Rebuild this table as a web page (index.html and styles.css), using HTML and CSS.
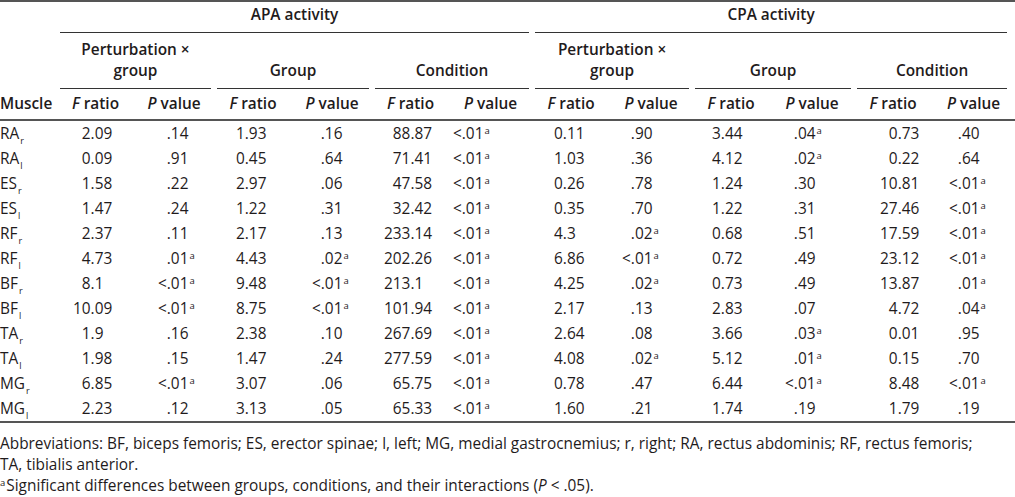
FILE: index.html
```html
<!DOCTYPE html>
<html lang="en">
<head>
<meta charset="utf-8">
<title>APA and CPA activity</title>
<link rel="stylesheet" href="styles.css">
</head>
<body>
<div class="page">
<table class="tbl">
<colgroup>
<col class="w-m"><col class="w1"><col class="w2"><col class="w3"><col class="w4"><col class="w5"><col class="w6"><col class="w7"><col class="w8"><col class="w9"><col class="w10"><col class="w11"><col class="w12">
</colgroup>
<thead>
<tr class="h1">
<th></th>
<th colspan="6"><div class="ul">APA activity</div></th>
<th colspan="6" class="last"><div class="ul">CPA activity</div></th>
</tr>
<tr class="h2">
<th></th>
<th colspan="2"><div class="ul">Perturbation ×<br>group</div></th>
<th colspan="2"><div class="ul">Group</div></th>
<th colspan="2"><div class="ul">Condition</div></th>
<th colspan="2"><div class="ul">Perturbation ×<br>group</div></th>
<th colspan="2"><div class="ul">Group</div></th>
<th colspan="2" class="last"><div class="ul">Condition</div></th>
</tr>
<tr class="h3">
<th class="muscle">Muscle</th>
<th><i>F</i> ratio</th><th><i>P</i> value</th>
<th><i>F</i> ratio</th><th><i>P</i> value</th>
<th><i>F</i> ratio</th><th><i>P</i> value</th>
<th><i>F</i> ratio</th><th><i>P</i> value</th>
<th><i>F</i> ratio</th><th><i>P</i> value</th>
<th><i>F</i> ratio</th><th><i>P</i> value</th>
</tr>
</thead>
<tbody class="data">
<tr><td>RA<sub>r</sub></td><td><span class="i">2</span>.09</td><td><span class="i"></span>.14</td><td><span class="i">1</span>.93</td><td><span class="i"></span>.16</td><td><span class="i">88</span>.87</td><td><span class="i">&lt;</span>.01<sup>a</sup></td><td><span class="i">0</span>.11</td><td><span class="i"></span>.90</td><td><span class="i">3</span>.44</td><td><span class="i"></span>.04<sup>a</sup></td><td><span class="i">0</span>.73</td><td><span class="i"></span>.40</td></tr>
<tr><td>RA<sub>l</sub></td><td><span class="i">0</span>.09</td><td><span class="i"></span>.91</td><td><span class="i">0</span>.45</td><td><span class="i"></span>.64</td><td><span class="i">71</span>.41</td><td><span class="i">&lt;</span>.01<sup>a</sup></td><td><span class="i">1</span>.03</td><td><span class="i"></span>.36</td><td><span class="i">4</span>.12</td><td><span class="i"></span>.02<sup>a</sup></td><td><span class="i">0</span>.22</td><td><span class="i"></span>.64</td></tr>
<tr><td>ES<sub>r</sub></td><td><span class="i">1</span>.58</td><td><span class="i"></span>.22</td><td><span class="i">2</span>.97</td><td><span class="i"></span>.06</td><td><span class="i">47</span>.58</td><td><span class="i">&lt;</span>.01<sup>a</sup></td><td><span class="i">0</span>.26</td><td><span class="i"></span>.78</td><td><span class="i">1</span>.24</td><td><span class="i"></span>.30</td><td><span class="i">10</span>.81</td><td><span class="i">&lt;</span>.01<sup>a</sup></td></tr>
<tr><td>ES<sub>l</sub></td><td><span class="i">1</span>.47</td><td><span class="i"></span>.24</td><td><span class="i">1</span>.22</td><td><span class="i"></span>.31</td><td><span class="i">32</span>.42</td><td><span class="i">&lt;</span>.01<sup>a</sup></td><td><span class="i">0</span>.35</td><td><span class="i"></span>.70</td><td><span class="i">1</span>.22</td><td><span class="i"></span>.31</td><td><span class="i">27</span>.46</td><td><span class="i">&lt;</span>.01<sup>a</sup></td></tr>
<tr><td>RF<sub>r</sub></td><td><span class="i">2</span>.37</td><td><span class="i"></span>.11</td><td><span class="i">2</span>.17</td><td><span class="i"></span>.13</td><td><span class="i">233</span>.14</td><td><span class="i">&lt;</span>.01<sup>a</sup></td><td><span class="i">4</span>.3</td><td><span class="i"></span>.02<sup>a</sup></td><td><span class="i">0</span>.68</td><td><span class="i"></span>.51</td><td><span class="i">17</span>.59</td><td><span class="i">&lt;</span>.01<sup>a</sup></td></tr>
<tr><td>RF<sub>l</sub></td><td><span class="i">4</span>.73</td><td><span class="i"></span>.01<sup>a</sup></td><td><span class="i">4</span>.43</td><td><span class="i"></span>.02<sup>a</sup></td><td><span class="i">202</span>.26</td><td><span class="i">&lt;</span>.01<sup>a</sup></td><td><span class="i">6</span>.86</td><td><span class="i">&lt;</span>.01<sup>a</sup></td><td><span class="i">0</span>.72</td><td><span class="i"></span>.49</td><td><span class="i">23</span>.12</td><td><span class="i">&lt;</span>.01<sup>a</sup></td></tr>
<tr><td>BF<sub>r</sub></td><td><span class="i">8</span>.1</td><td><span class="i">&lt;</span>.01<sup>a</sup></td><td><span class="i">9</span>.48</td><td><span class="i">&lt;</span>.01<sup>a</sup></td><td><span class="i">213</span>.1</td><td><span class="i">&lt;</span>.01<sup>a</sup></td><td><span class="i">4</span>.25</td><td><span class="i"></span>.02<sup>a</sup></td><td><span class="i">0</span>.73</td><td><span class="i"></span>.49</td><td><span class="i">13</span>.87</td><td><span class="i"></span>.01<sup>a</sup></td></tr>
<tr><td>BF<sub>l</sub></td><td><span class="i">10</span>.09</td><td><span class="i">&lt;</span>.01<sup>a</sup></td><td><span class="i">8</span>.75</td><td><span class="i">&lt;</span>.01<sup>a</sup></td><td><span class="i">101</span>.94</td><td><span class="i">&lt;</span>.01<sup>a</sup></td><td><span class="i">2</span>.17</td><td><span class="i"></span>.13</td><td><span class="i">2</span>.83</td><td><span class="i"></span>.07</td><td><span class="i">4</span>.72</td><td><span class="i"></span>.04<sup>a</sup></td></tr>
<tr><td>TA<sub>r</sub></td><td><span class="i">1</span>.9</td><td><span class="i"></span>.16</td><td><span class="i">2</span>.38</td><td><span class="i"></span>.10</td><td><span class="i">267</span>.69</td><td><span class="i">&lt;</span>.01<sup>a</sup></td><td><span class="i">2</span>.64</td><td><span class="i"></span>.08</td><td><span class="i">3</span>.66</td><td><span class="i"></span>.03<sup>a</sup></td><td><span class="i">0</span>.01</td><td><span class="i"></span>.95</td></tr>
<tr><td>TA<sub>l</sub></td><td><span class="i">1</span>.98</td><td><span class="i"></span>.15</td><td><span class="i">1</span>.47</td><td><span class="i"></span>.24</td><td><span class="i">277</span>.59</td><td><span class="i">&lt;</span>.01<sup>a</sup></td><td><span class="i">4</span>.08</td><td><span class="i"></span>.02<sup>a</sup></td><td><span class="i">5</span>.12</td><td><span class="i"></span>.01<sup>a</sup></td><td><span class="i">0</span>.15</td><td><span class="i"></span>.70</td></tr>
<tr><td>MG<sub>r</sub></td><td><span class="i">6</span>.85</td><td><span class="i">&lt;</span>.01<sup>a</sup></td><td><span class="i">3</span>.07</td><td><span class="i"></span>.06</td><td><span class="i">65</span>.75</td><td><span class="i">&lt;</span>.01<sup>a</sup></td><td><span class="i">0</span>.78</td><td><span class="i"></span>.47</td><td><span class="i">6</span>.44</td><td><span class="i">&lt;</span>.01<sup>a</sup></td><td><span class="i">8</span>.48</td><td><span class="i">&lt;</span>.01<sup>a</sup></td></tr>
<tr><td>MG<sub>l</sub></td><td><span class="i">2</span>.23</td><td><span class="i"></span>.12</td><td><span class="i">3</span>.13</td><td><span class="i"></span>.05</td><td><span class="i">65</span>.33</td><td><span class="i">&lt;</span>.01<sup>a</sup></td><td><span class="i">1</span>.60</td><td><span class="i"></span>.21</td><td><span class="i">1</span>.74</td><td><span class="i"></span>.19</td><td><span class="i">1</span>.79</td><td><span class="i"></span>.19</td></tr>
</tbody>
</table>
<div class="notes">
<p>Abbreviations: BF, biceps femoris; ES, erector spinae; l, left; MG, medial gastrocnemius; r, right; RA, rectus abdominis; RF, rectus femoris;<br>TA, tibialis anterior.</p>
<p><sup>a</sup>Significant differences between groups, conditions, and their interactions (<i>P</i> &lt; .05).</p>
</div>
</div>
</body>
</html>
```

FILE: styles.css
```css
html, body {
  margin: 0;
  padding: 0;
  background: #ffffff;
}

body {
  font-family: "Open Sans", "Noto Sans", sans-serif;
  font-size: 15.4px;
  color: #1f1b1c;
}

.page {
  width: 1015px;
}

.tbl {
  width: 1015px;
  table-layout: fixed;
  border-collapse: collapse;
  border-top: 2px solid #555555;
}

.w-m { width: 57px; }
.w1 { width: 77px; }
.w2 { width: 80px; }
.w3 { width: 78px; }
.w4 { width: 80px; }
.w5 { width: 77px; }
.w6 { width: 83px; }
.w7 { width: 78px; }
.w8 { width: 82px; }
.w9 { width: 78px; }
.w10 { width: 84px; }
.w11 { width: 78px; }
.w12 { width: 83px; }

th {
  font-weight: 600;
  text-align: center;
  vertical-align: bottom;
  padding: 0;
  white-space: nowrap;
}

th i, .notes i {
  font-style: italic;
}

.ul {
  margin: 0 3px;
  border-bottom: 1px solid #333333;
}

.last .ul {
  margin-right: 8px;
}

.h1 .ul {
  line-height: 20px;
  padding: 3px 0 7px;
}

.h2 .ul {
  line-height: 21px;
  padding: 6px 0 7px;
}

.h3 th {
  line-height: 20px;
  padding: 5px 0 5px;
  border-bottom: 2px solid #555555;
}

.h3 th.muscle {
  text-align: left;
}

.data tr {
  height: 25px;
}

.data td {
  padding: 0;
  line-height: 25px;
  white-space: nowrap;
  text-align: left;
}

.data tr:last-child td {
  border-bottom: 2px solid #555555;
}

sub {
  font-size: 9px;
  line-height: 0;
  vertical-align: -5px;
  margin-left: 1px;
}

sup {
  font-size: 9.5px;
  line-height: 0;
  vertical-align: 5px;
  margin-left: 1px;
}

.i {
  display: inline-block;
  text-align: right;
  width: 0.572em;
}

.data td:nth-child(2) { padding-left: 16px; }
.data td:nth-child(2) .i { width: 1.144em; }
.data td:nth-child(3) { padding-left: 24px; }
.data td:nth-child(4) { padding-left: 22px; }
.data td:nth-child(5) { padding-left: 20px; }
.data td:nth-child(6) { padding-left: 12px; }
.data td:nth-child(6) .i { width: 1.716em; }
.data td:nth-child(7) { padding-left: 4px; }
.data td:nth-child(8) { padding-left: 22px; }
.data td:nth-child(9) { padding-left: 12px; }
.data td:nth-child(10) { padding-left: 20px; }
.data td:nth-child(11) { padding-left: 15px; }
.data td:nth-child(12) { padding-left: 26px; }
.data td:nth-child(12) .i { width: 1.144em; }
.data td:nth-child(13) { padding-left: 17px; }

.notes {
  padding-top: 10px;
}

.notes p {
  margin: 0;
  line-height: 21px;
}

.notes sup {
  margin-left: 0;
  margin-right: 1px;
}
```
